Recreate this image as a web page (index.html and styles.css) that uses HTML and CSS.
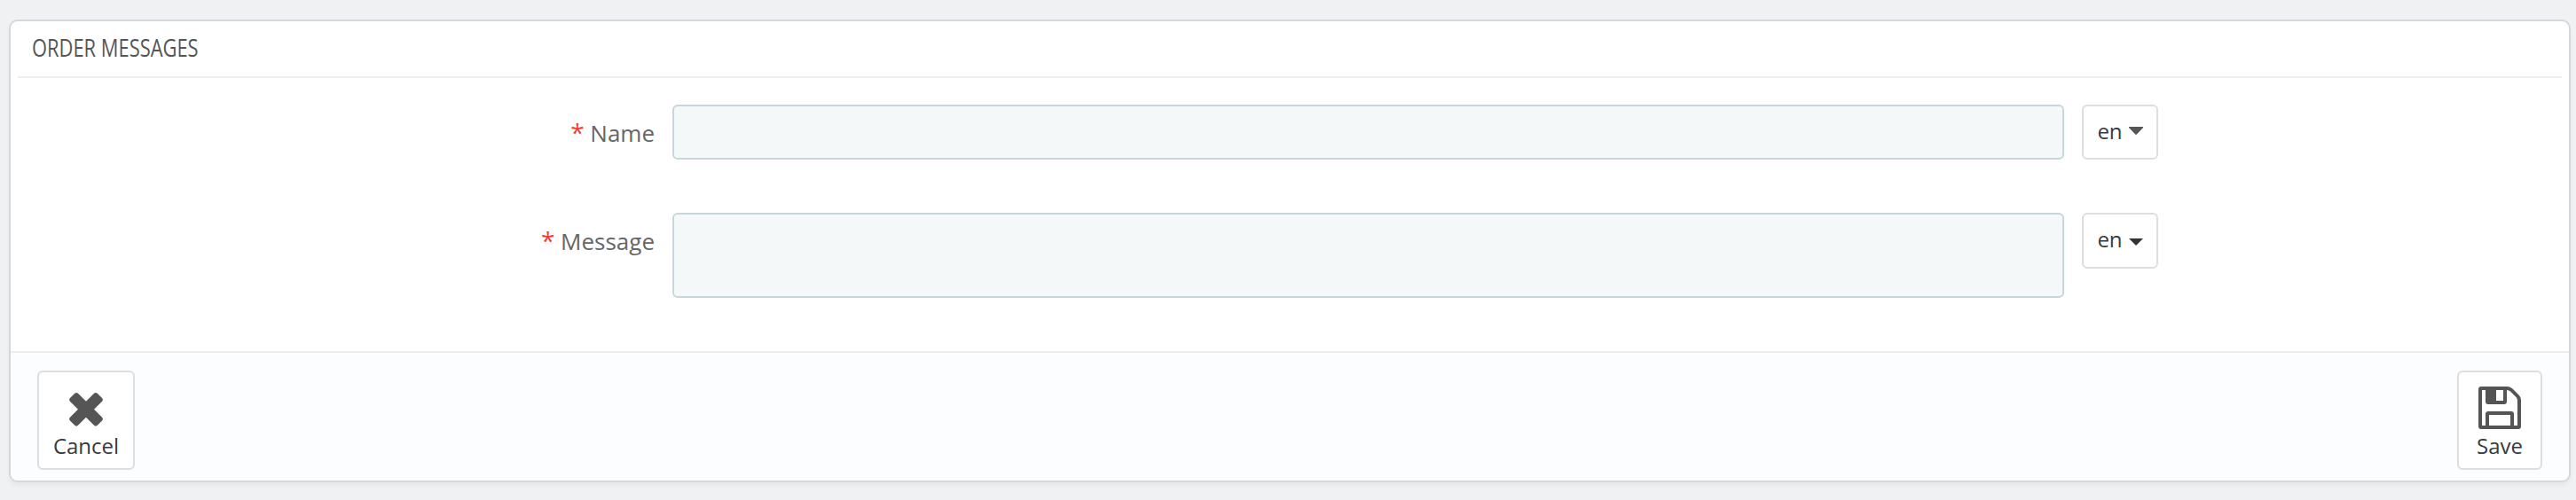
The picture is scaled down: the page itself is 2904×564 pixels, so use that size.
FILE: index.html
```html
<!DOCTYPE html>
<html lang="en">
<head>
<meta charset="utf-8">
<title>Order messages</title>
<link rel="stylesheet" href="styles.css">
</head>
<body>
<form class="panel">
  <h3 class="panel-heading"><span class="heading-text">ORDER MESSAGES</span></h3>
  <div class="fields">
    <div class="row">
      <label class="label" for="name"><span class="required">*</span> Name</label>
      <input class="control" id="name" type="text">
      <button class="lang" type="button">en
        <svg class="caret" width="16" height="9" viewBox="0 0 16 9"><path d="M0 0H16V1L8.800 8.500Q8 9.200 7.200 8.500L0 1Z" fill="#555"/></svg>
      </button>
    </div>
    <div class="row row-message">
      <label class="label" for="message"><span class="required">*</span> Message</label>
      <textarea class="control control-area" id="message"></textarea>
      <button class="lang lang-tall" type="button">en
        <svg class="caret caret-low" width="16" height="8" viewBox="0 0 16 8"><path d="M0 0H16L8 8Z" fill="#333"/></svg>
      </button>
    </div>
  </div>
  <div class="panel-footer">
    <button class="action cancel" type="button">
      <svg class="icon" width="48" height="48" viewBox="0 0 48 48"><g transform="translate(24 25.800) rotate(45)" fill="#555"><rect x="-21.800" y="-6.400" width="43.600" height="12.800" rx="3"/><rect x="-6.400" y="-21.800" width="12.800" height="43.600" rx="3"/></g></svg>
      <span>Cancel</span>
    </button>
    <button class="action save" type="submit">
      <svg class="icon" width="48" height="48" viewBox="0 0 48 48" fill="#555"><path fill-rule="evenodd" d="M3 0H33Q36 0 38.500 2.500L45.500 9.500Q48 12 48 15V45Q48 48 45 48H3Q0 48 0 45V3Q0 0 3 0ZM4 4V44H8V31Q8 28 11 28H37Q40 28 40 31V44H44V15.500Q44 13.500 42.500 12L36 5.500Q34.500 4 32 4V17Q32 20 29 20H11Q8 20 8 17V4ZM20 4V16H28V4ZM12 32V44H36V32Z"/></svg>
      <span>Save</span>
    </button>
  </div>
</form>
</body>
</html>
```
FILE: styles.css
```css
* { box-sizing: border-box; }
body {
  margin: 0;
  padding: 22px 6px 20px 10px;
  height: 564px;
  background: #eff1f2;
  font-family: "Open Sans", "Noto Sans", sans-serif;
}
.panel {
  display: flex;
  flex-direction: column;
  height: 522px;
  background: #fff;
  border: 2px solid #d3d8db;
  border-radius: 10px;
  box-shadow: 0 4px 4px rgba(0, 0, 0, .04);
  overflow: hidden;
}
.panel-heading {
  height: 64px;
  margin: 0 8px;
  padding-left: 16px;
  border-bottom: 2px solid #eee;
  color: #555;
  font-size: 27px;
  font-weight: 400;
  line-height: 60px;
}
.heading-text {
  display: inline-block;
  transform: scaleX(.811);
  transform-origin: left;
  white-space: nowrap;
}
.fields { flex: 1; padding-top: 30px; }
.row {
  display: grid;
  grid-template-columns: 726px 1569px 86px;
  column-gap: 20px;
  align-items: start;
  height: 122px;
}
.label {
  color: #666;
  font-size: 26px;
  line-height: 64px;
  text-align: right;
}
.required { color: #f13f34; font-size: 28px; line-height: 1; }
.control {
  width: 100%;
  height: 62px;
  margin: 0;
  padding: 12px 16px;
  background: #f5f8f9;
  border: 2px solid #c7d6db;
  border-radius: 6px;
  font: 24px "Open Sans", sans-serif;
  resize: none;
}
.control-area { height: 96px; }
.lang, .action {
  background: #fff;
  border: 2px solid #dedede;
  border-radius: 6px;
  color: #363a41;
  font: 24px "Open Sans", sans-serif;
}
.lang {
  display: flex;
  justify-content: center;
  gap: 7px;
  height: 62px;
  padding: 0;
  line-height: 56px;
}
.lang-tall { height: 63px; }
.caret { margin-top: 23px; }
.caret-low { margin-top: 27px; }
.panel-footer {
  display: flex;
  justify-content: space-between;
  height: 146px;
  padding: 20px 30px;
  background: #fcfdfe;
  border-top: 2px solid #eaedef;
}
.action {
  display: flex;
  flex-direction: column;
  align-items: center;
  height: 112px;
  padding: 16px 0 0;
  line-height: 38px;
}
.icon { flex: none; }
.cancel { width: 110px; }
.save { width: 96px; }
```
